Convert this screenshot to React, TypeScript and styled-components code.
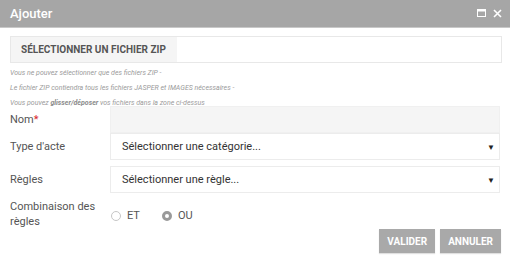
import React from "react";
import styled, { createGlobalStyle } from "styled-components";

const Global = createGlobalStyle`
  html, body { margin: 0; padding: 0; background: #fff; }
  body { font-family: Roboto, "Liberation Sans", Arial, sans-serif; }
`;

const Window = styled.div`
  width: 510px;
  height: 260px;
  background: #fff;
  display: flex;
  flex-direction: column;
`;

const TitleBar = styled.div`
  height: 27px;
  background: #a6a6a6;
  display: flex;
  align-items: center;
  justify-content: space-between;
  padding: 0 8px 0 10px;
  border-bottom: 1px solid #c8c8c8;
`;

const Title = styled.span`
  color: #fff;
  font-size: 13px;
  font-weight: 500;
`;

const TitleIcons = styled.div`
  display: flex;
  align-items: center;
  gap: 7px;
`;

const Body = styled.div`
  padding: 8px 8px 0 10px;
  display: flex;
  flex-direction: column;
`;

const FileBox = styled.div`
  height: 25px;
  border: 1px solid #e8e8e8;
  display: flex;
`;

const FileButton = styled.div`
  box-sizing: border-box;
  width: 166px;
  background: #f5f5f5;
  color: #555;
  font-size: 10px;
  font-weight: 700;
  display: flex;
  align-items: center;
  padding-left: 10px;
  white-space: nowrap;
`;

const Hints = styled.div`
  margin-top: 3px;
  display: flex;
  flex-direction: column;
`;

const Hint = styled.div`
  font-size: 7px;
  font-style: italic;
  color: #9a9a9a;
  line-height: 15px;
  b { font-weight: 700; color: #8a8a8a; }
`;

const Row = styled.div<{ $mt?: number; $h?: number }>`
  display: grid;
  grid-template-columns: 100px 1fr;
  align-items: center;
  margin-top: ${(p) => p.$mt ?? 0}px;
  margin-right: 2px;
  min-height: ${(p) => p.$h ?? 26}px;
`;

const Label = styled.div`
  font-size: 11px;
  color: #555;
  line-height: 15px;
`;

const Req = styled.span`
  color: #d9262b;
`;

const Input = styled.div`
  height: 25px;
  background: #f5f5f5;
  border: 1px solid #f0f0f0;
`;

const Select = styled.div`
  height: 25px;
  background: #fff;
  border: 1px solid #ececec;
  display: flex;
  align-items: center;
  justify-content: space-between;
  padding: 0 4px 0 11px;
  font-size: 11px;
  color: #333;
`;

const Caret = styled.span`
  font-size: 8px;
  color: #222;
  margin-top: 2px;
`;

const Radios = styled.div`
  display: flex;
  align-items: center;
  gap: 22px;
  padding-left: 1px;
  margin-top: 3px;
`;

const RadioItem = styled.label`
  display: flex;
  align-items: center;
  gap: 6px;
  font-size: 11px;
  color: #555;
`;

const RadioCircle = styled.span<{ $checked?: boolean }>`
  box-sizing: border-box;
  width: 10px;
  height: 10px;
  border-radius: 50%;
  border: ${(p) => (p.$checked ? "3px solid #9a9a9a" : "1px solid #c6c6c6")};
  background: #fff;
`;

const Actions = styled.div`
  display: flex;
  justify-content: flex-end;
  gap: 5px;
  margin-top: 0;
  margin-right: 1px;
`;

const Button = styled.button`
  height: 24px;
  border: none;
  background: #a9a9a9;
  color: #fff;
  font-family: Roboto, "Liberation Sans", Arial, sans-serif;
  font-size: 10px;
  font-weight: 700;
  padding: 0 8px;
  box-shadow: 0 1px 1px rgba(0, 0, 0, 0.12);
`;

export default function App() {
  return (
    <>
      <Global />
      <Window>
        <TitleBar>
          <Title>Ajouter</Title>
          <TitleIcons>
            <svg width="9" height="9" viewBox="0 0 9 9">
              <rect x="0.5" y="0.5" width="8" height="7" fill="none" stroke="#fff" strokeWidth="1" />
              <rect x="0.5" y="0.5" width="8" height="2" fill="#fff" />
            </svg>
            <svg width="9" height="9" viewBox="0 0 9 9">
              <path d="M1 1 L8 8 M8 1 L1 8" stroke="#fff" strokeWidth="1.6" />
            </svg>
          </TitleIcons>
        </TitleBar>
        <Body>
          <FileBox>
            <FileButton>SÉLECTIONNER UN FICHIER ZIP</FileButton>
          </FileBox>
          <Hints>
            <Hint>Vous ne pouvez sélectionner que des fichiers ZIP -</Hint>
            <Hint>Le fichier ZIP contiendra tous les fichiers JASPER et IMAGES nécessaires -</Hint>
            <Hint>
              Vous pouvez <b>glisser/déposer</b> vos fichiers dans la zone ci-dessus
            </Hint>
          </Hints>
          <Row $mt={-5}>
            <Label>
              Nom<Req>*</Req>
            </Label>
            <Input />
          </Row>
          <Row $mt={0}>
            <Label>Type d'acte</Label>
            <Select>
              Sélectionner une catégorie...
              <Caret>▼</Caret>
            </Select>
          </Row>
          <Row $mt={6}>
            <Label>Règles</Label>
            <Select>
              Sélectionner une règle...
              <Caret>▼</Caret>
            </Select>
          </Row>
          <Row $mt={6} $h={30}>
            <Label>
              Combinaison des
              <br />
              règles
            </Label>
            <Radios>
              <RadioItem>
                <RadioCircle />
                ET
              </RadioItem>
              <RadioItem>
                <RadioCircle $checked />
                OU
              </RadioItem>
            </Radios>
          </Row>
          <Actions>
            <Button>VALIDER</Button>
            <Button>ANNULER</Button>
          </Actions>
        </Body>
      </Window>
    </>
  );
}
